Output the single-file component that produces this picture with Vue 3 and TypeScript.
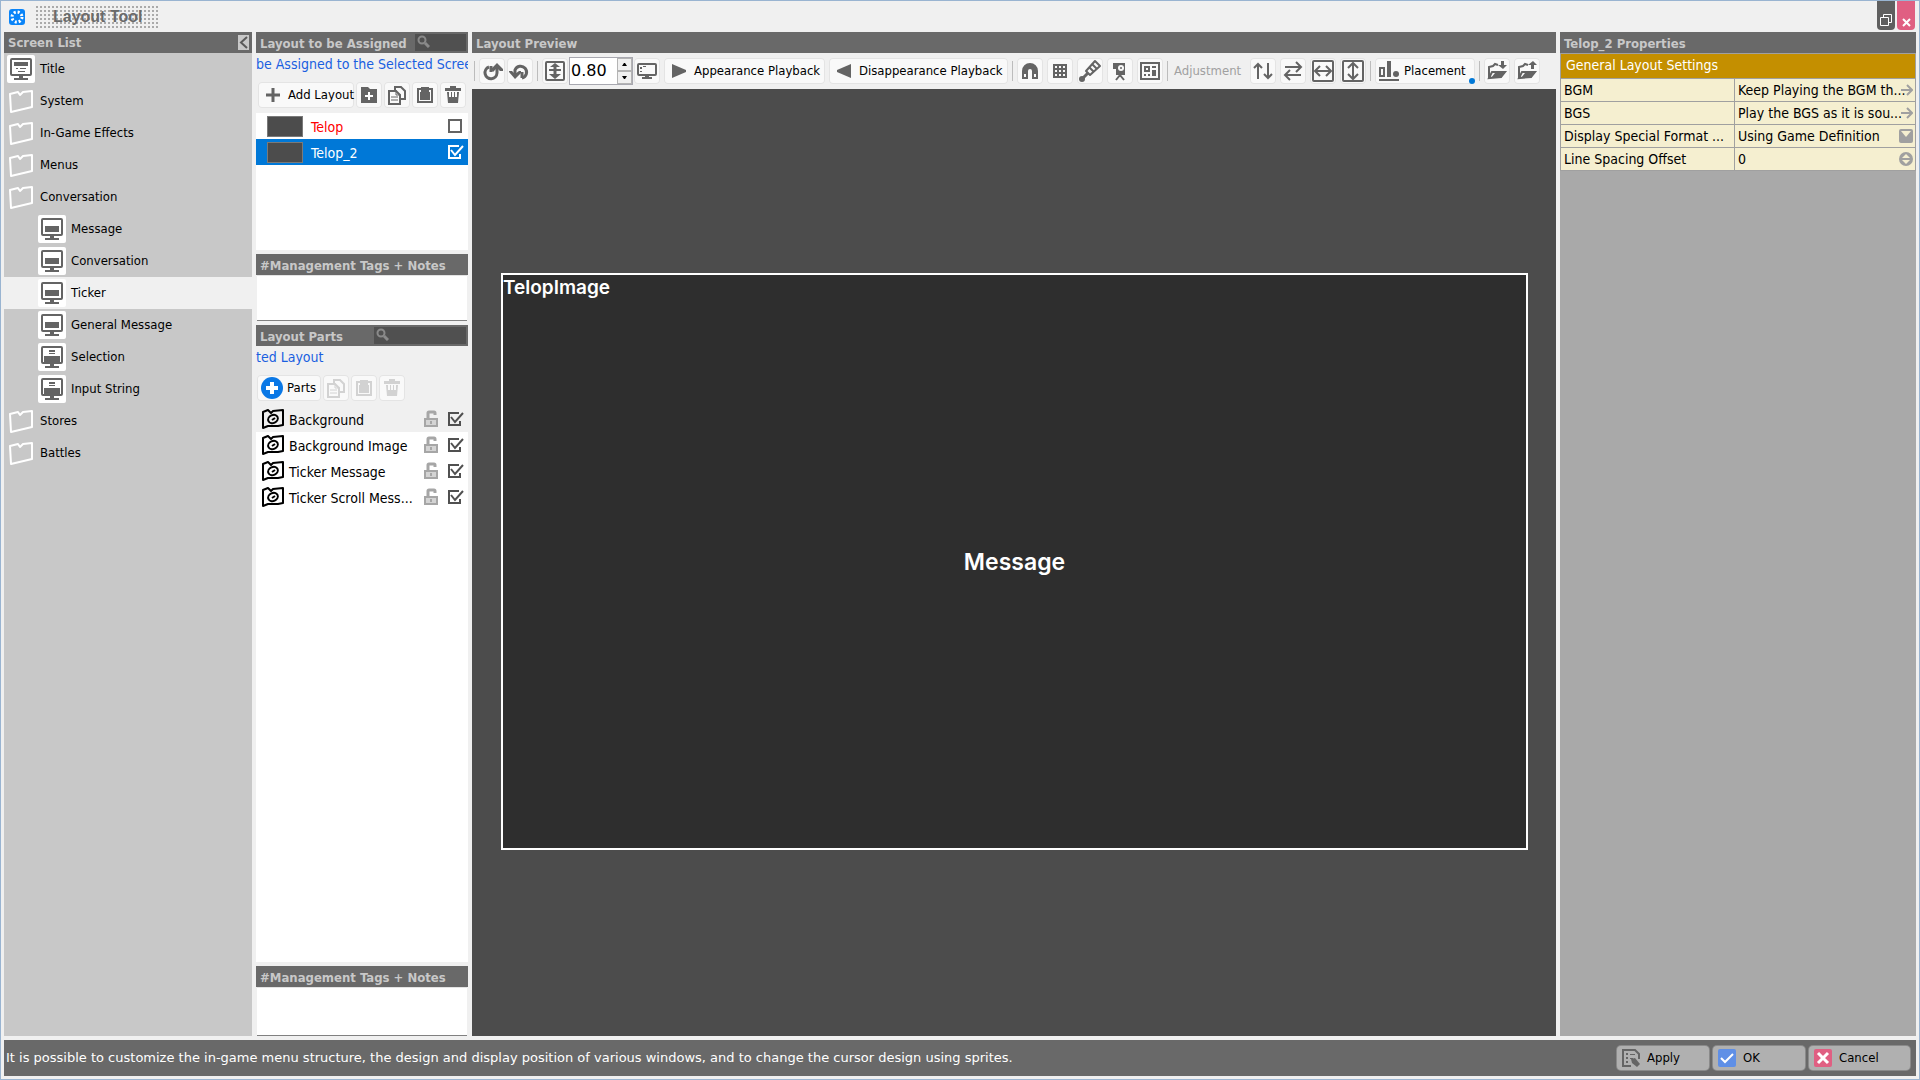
<script setup lang="ts">
import { ref } from 'vue'

interface Screen {
  name: string
  icon: string
  child?: boolean
}

const screens: Screen[] = [
  { name: 'Title', icon: 'title' },
  { name: 'System', icon: 'folder' },
  { name: 'In-Game Effects', icon: 'folder' },
  { name: 'Menus', icon: 'folder' },
  { name: 'Conversation', icon: 'folder' },
  { name: 'Message', icon: 'message', child: true },
  { name: 'Conversation', icon: 'message', child: true },
  { name: 'Ticker', icon: 'message', child: true },
  { name: 'General Message', icon: 'message', child: true },
  { name: 'Selection', icon: 'choice', child: true },
  { name: 'Input String', icon: 'choice', child: true },
  { name: 'Stores', icon: 'folder' },
  { name: 'Battles', icon: 'folder' },
]
const selectedScreen = ref(7)

const layouts = ref([
  { name: 'Telop', used: false },
  { name: 'Telop_2', used: true },
])
const selectedLayout = ref(1)

const parts = ref([
  { name: 'Background', shown: true },
  { name: 'Background Image', shown: true },
  { name: 'Ticker Message', shown: true },
  { name: 'Ticker Scroll Mess...', shown: true },
])
const selectedPart = ref(0)

const zoom = ref('0.80')
const layoutNotes = ref('')
const partNotes = ref('')
const lineSpacing = ref('0')

const monitor =
  '<rect width="28" height="28" rx="2" fill="#fff"/><rect x="4" y="4" width="20" height="16" rx="1" fill="none" stroke="#646464" stroke-width="2"/><path d="M12 21h4v2h5v2H7v-2h5z" fill="#646464"/>'

const treeIcons: Record<string, string> = {
  title: monitor + '<path d="M7 7h14v4H7zM9 13h2v1H9zM13 13h6v1h-6zM11 16h7v1h-7z" fill="#646464"/>',
  message: monitor + '<path d="M7 11h14v6H7z" fill="#646464"/>',
  choice: monitor + '<path d="M11 7h6v2h-6zM11 10h6v1h-6zM6 13h16v6H6z" fill="#646464"/>',
  folder: '<path d="M3 7l8-2 2 3 3-3 9-1v16L4 25z" fill="none" stroke="#fff" stroke-width="2" stroke-linejoin="round"/>',
}

const trash = '<path d="M5 6h5V4h6v2h5v3H5zM7 10h2v5h2v-5h1v5h2v-5h1v5h2v-5h2l-1 11H8z" fill="currentColor"/>'
const copy =
  '<path d="M11 8V5h6l4 4v8h-4" fill="none" stroke="currentColor" stroke-width="2"/><path d="M5 9h7l4 4v9H5z" fill="#f9f9f9" stroke="currentColor" stroke-width="2"/><path d="M12 8v5h5M7 15h7M7 18h7" fill="none" stroke="currentColor" stroke-width="1"/>'
const paste =
  '<path d="M5 6h4V5h8v1h4v15H5zM7 8v11h12V8z" fill="currentColor" fill-rule="evenodd"/><path d="M9 8h8v2h1v8H8v-8h1z" fill="currentColor"/>'

const icons: Record<string, string> = {
  trash,
  copy,
  paste,
  newFolder: '<path d="M5 5h7l2 2h7v14H5z" fill="currentColor"/><path d="M13 10v8M9 14h8" stroke="#fff" stroke-width="2"/>',
  redo: '<path d="M10 9a6 6 0 1 0 8 6V9" fill="none" stroke="currentColor" stroke-width="3"/><path d="M12 11l6-6 6 6v2h-3l-3-3-4 4z" fill="currentColor"/><path d="M12 8v6" stroke="currentColor" stroke-width="3"/>',
  undo: '<path d="M15 20a6 6 0 1 0-7-8v6" fill="none" stroke="currentColor" stroke-width="3"/><path d="M2 14l6 7 6-6v-2h-2l-4 3-3-3H2z" fill="currentColor"/><path d="M15 20v-6" stroke="currentColor" stroke-width="3"/>',
  fit: '<rect x="4" y="4" width="18" height="18" rx="1" fill="none" stroke="currentColor" stroke-width="2"/><path d="M13 7v11" stroke="currentColor" stroke-width="3"/><path d="M7 12h12" stroke="currentColor" stroke-width="2"/><path d="M13 5l5 4H8zM13 21l-6-5h12z" fill="currentColor"/>',
  screen: '<rect x="4" y="6" width="18" height="11" rx="1" fill="none" stroke="currentColor" stroke-width="2"/><path d="M11 17h4v2h3v2H8v-2h3zM6 9h2v2H6zM9 8h3v1H9zM6 13h2v1H6z" fill="currentColor"/>',
  magnet: '<path d="M5 21V13a8 8 0 0 1 16 0v8h-6v-8a2 2 0 0 0-4 0v8z" fill="currentColor"/><path d="M7 16v3h2v-3zM17 16v3h2v-3z" fill="#f9f9f9"/>',
  grid: '<path d="M6 6h14v14H6z" fill="currentColor"/><path d="M8 8h2v2H8zM12 8h2v2h-2zM16 8h2v2h-2zM8 12h2v2H8zM12 12h2v2h-2zM16 12h2v2h-2zM8 16h2v2H8zM12 16h2v2h-2zM16 16h2v2h-2z" fill="#f9f9f9"/>',
  brush: '<path d="M9 13L18 3l5 5-10 9z" fill="#f9f9f9" stroke="currentColor" stroke-width="2" stroke-linejoin="round"/><path d="M15 6l5 5M12 9l5 5" stroke="currentColor" stroke-width="2"/><circle cx="5" cy="21" r="3" fill="currentColor"/><path d="M6 20l5-5" stroke="currentColor" stroke-width="3"/>',
  camera: '<path d="M6 5h12v12H9v-6H6z" fill="currentColor"/><circle cx="14" cy="10" r="3" fill="#f9f9f9"/><circle cx="14" cy="10" r="1" fill="currentColor"/><path d="M13 16v2M13 17l-4 5M13 17l4 5" stroke="currentColor" stroke-width="2"/>',
  frame: '<rect x="4" y="5" width="18" height="16" fill="none" stroke="currentColor" stroke-width="2"/><path d="M7 8h6v6H7zM9 10v2h2v-2zM15 8h4v2h-4zM15 12h4v6h-4zM7 16h2v2H7zM11 16h2v2h-2z" fill="currentColor" fill-rule="evenodd"/>',
  vertical: '<path d="M8 21V6M4 10l4-4 4 4M18 5v15M14 16l4 4 4-4" fill="none" stroke="currentColor" stroke-width="2"/>',
  horizontal: '<path d="M5 9h15M16 4l5 5-5 5M21 17H6M10 12l-5 5 5 5" fill="none" stroke="currentColor" stroke-width="2"/>',
  stretchH: '<rect x="3" y="3" width="20" height="20" rx="1" fill="none" stroke="currentColor" stroke-width="2"/><path d="M6 13h14M10 8l-5 5 5 5M16 8l5 5-5 5" fill="none" stroke="currentColor" stroke-width="2"/>',
  stretchV: '<rect x="3" y="3" width="20" height="20" rx="1" fill="none" stroke="currentColor" stroke-width="2"/><path d="M13 6v14M8 10l5-5 5 5M8 16l5 5 5-5" fill="none" stroke="currentColor" stroke-width="2"/>',
  importFile: '<path d="M5 20V9l4-1 2-2 3 1M5 20l3-6h13l-4 5z" fill="none" stroke="currentColor" stroke-width="2"/><path d="M7 20l4-5 11-2-5 7z" fill="currentColor"/><path d="M17 3h3v4h3l-4 4-5-4h3z" fill="currentColor"/>',
  exportFile: '<path d="M5 20V9l4-1 2-2 3 1M5 20l3-6h13l-4 5z" fill="none" stroke="currentColor" stroke-width="2"/><path d="M7 20l4-5 11-2-5 7z" fill="currentColor"/><path d="M17 11h3V7h3l-4-4-5 4h3z" fill="currentColor"/>',
}

const layoutTools = ['newFolder', 'copy', 'paste', 'trash']
const partTools = ['copy', 'paste', 'trash']
const viewTools = ['magnet', 'grid', 'brush', 'camera', 'frame']
const adjustTools = ['vertical', 'horizontal', 'stretchH', 'stretchV']
</script>

<template>
  <div class="window">
    <header class="titlebar">
      <svg class="app-icon" width="16" height="16" viewBox="0 0 16 16">
        <rect width="16" height="16" rx="3" fill="#0a84f8" />
        <circle cx="8" cy="8" r="5" fill="none" stroke="#fff" stroke-width="3" stroke-dasharray="2 1.93" />
      </svg>
      <h1>Layout Tool</h1>
      <div class="window-buttons">
        <button class="restore" aria-label="Restore">
          <svg width="18" height="29" viewBox="0 0 18 29">
            <path d="M3.500 16.500h8v8h-8zM6.500 16v-2.500h8v8H12" fill="none" stroke="#fff" />
          </svg>
        </button>
        <button class="close" aria-label="Close">
          <svg width="18" height="29" viewBox="0 0 18 29">
            <path d="M6 18l7 7M13 18l-7 7" stroke="#fff" stroke-width="2" />
          </svg>
        </button>
      </div>
    </header>

    <main class="panels">
      <section class="panel screen-list">
        <h2 class="panel-head">
          Screen List
          <button class="collapse" aria-label="Collapse">
            <svg width="11" height="15" viewBox="0 0 11 15">
              <path d="M9 2L3 7.500 9 13" fill="none" stroke="#5a5a5a" stroke-width="2" />
            </svg>
          </button>
        </h2>
        <ul class="tree">
          <li v-for="(screen, i) in screens" :key="i">
            <button
              class="tree-item"
              :class="{ child: screen.child, selected: i === selectedScreen }"
              @click="selectedScreen = i"
            >
              <svg width="28" height="28" viewBox="0 0 28 28" v-html="treeIcons[screen.icon]" />
              <span>{{ screen.name }}</span>
            </button>
          </li>
        </ul>
      </section>

      <section class="column">
        <div class="panel-head">
          <h2>Layout to be Assigned</h2>
          <label class="search narrow">
            <svg width="13" height="13" viewBox="0 0 13 13">
              <circle cx="5" cy="5" r="3.500" fill="none" stroke="#8a8a8a" stroke-width="2" />
              <path d="M8 8l4 4" stroke="#8a8a8a" stroke-width="3" />
            </svg>
            <input type="text" aria-label="Search layouts" />
          </label>
        </div>
        <a href="#" class="hint">be Assigned to the Selected Scree</a>
        <div class="tools layout-tools">
          <button class="tool labelled add">
            <svg width="14" height="14" viewBox="0 0 14 14"><path d="M7 0v14M0 7h14" stroke="#646464" stroke-width="3" /></svg>
            Add Layout
          </button>
          <button v-for="t in layoutTools" :key="t" class="tool" :aria-label="t">
            <svg width="26" height="26" viewBox="0 0 26 26" v-html="icons[t]" />
          </button>
        </div>
        <ul class="list layouts">
          <li
            v-for="(layout, i) in layouts"
            :key="layout.name"
            class="layout-row"
            :class="{ selected: i === selectedLayout }"
            @click="selectedLayout = i"
          >
            <span class="thumb"></span>
            <span class="row-name">{{ layout.name }}</span>
            <label class="check">
              <input v-model="layout.used" type="checkbox" :aria-label="layout.name" />
              <svg width="18" height="16" viewBox="0 0 18 16">
                <path v-if="layout.used" d="M12 2H2v12h11v-4" fill="none" stroke="currentColor" stroke-width="2" />
                <path v-if="layout.used" d="M4 6l4 5 8-9" fill="none" stroke="currentColor" stroke-width="2" />
                <rect v-else x="2" y="2" width="12" height="12" fill="none" stroke="currentColor" stroke-width="2" />
              </svg>
            </label>
          </li>
        </ul>
        <h2 class="panel-head notes-head"><label for="layout-notes">#Management Tags + Notes</label></h2>
        <textarea id="layout-notes" v-model="layoutNotes" class="notes"></textarea>

        <div class="panel-head parts-head">
          <h2>Layout Parts</h2>
          <label class="search wide">
            <svg width="13" height="13" viewBox="0 0 13 13">
              <circle cx="5" cy="5" r="3.500" fill="none" stroke="#8a8a8a" stroke-width="2" />
              <path d="M8 8l4 4" stroke="#8a8a8a" stroke-width="3" />
            </svg>
            <input type="text" aria-label="Search parts" />
          </label>
        </div>
        <a href="#" class="hint">ted Layout</a>
        <div class="tools part-tools">
          <button class="tool labelled parts-button">
            <svg width="22" height="22" viewBox="0 0 22 22">
              <circle cx="11" cy="11" r="11" fill="#0a78e6" />
              <path d="M11 5v12M5 11h12" stroke="#fff" stroke-width="4" />
            </svg>
            Parts
          </button>
          <button v-for="t in partTools" :key="t" class="tool" disabled :aria-label="t">
            <svg width="26" height="26" viewBox="0 0 26 26" v-html="icons[t]" />
          </button>
        </div>
        <ul class="list parts">
          <li
            v-for="(part, i) in parts"
            :key="part.name"
            class="part-row"
            :class="{ selected: i === selectedPart }"
            @click="selectedPart = i"
          >
            <svg width="24" height="24" viewBox="0 0 24 24">
              <path d="M2 5l5-2 3 3 2-2 10-1v15l-5 1H7l-5 2z" fill="none" stroke="#000" stroke-width="2" stroke-linejoin="round" />
              <ellipse cx="12" cy="12" rx="5" ry="4" fill="none" stroke="#000" stroke-width="2" transform="rotate(-25 12 12)" />
              <path d="M11 13l3-2" stroke="#000" stroke-width="2" />
            </svg>
            <span class="row-name">{{ part.name }}</span>
            <svg width="14" height="18" viewBox="0 0 14 18">
              <path d="M4 9V3q0-1 1-1h5q1 0 1 1v2" fill="none" stroke="#a6a6a6" stroke-width="3" />
              <path d="M1 9h12v7H1z" fill="#d4d4d4" stroke="#a6a6a6" stroke-width="2" />
              <path d="M6 11h2v3H6z" fill="#a6a6a6" />
            </svg>
            <label class="check">
              <input v-model="part.shown" type="checkbox" :aria-label="part.name" />
              <svg width="18" height="16" viewBox="0 0 18 16">
                <path v-if="part.shown" d="M12 2H2v12h11v-4" fill="none" stroke="currentColor" stroke-width="2" />
                <path v-if="part.shown" d="M4 6l4 5 8-9" fill="none" stroke="currentColor" stroke-width="2" />
                <rect v-else x="2" y="2" width="12" height="12" fill="none" stroke="currentColor" stroke-width="2" />
              </svg>
            </label>
          </li>
        </ul>
        <h2 class="panel-head notes-head"><label for="part-notes">#Management Tags + Notes</label></h2>
        <textarea id="part-notes" v-model="partNotes" class="notes part-notes"></textarea>
      </section>

      <section class="column">
        <h2 class="panel-head">Layout Preview</h2>
        <div class="toolbar">
          <i class="sep"></i>
          <div class="group history">
            <button class="tool" aria-label="Redo"><svg width="26" height="26" viewBox="0 0 26 26" v-html="icons.redo" /></button>
            <button class="tool" aria-label="Undo"><svg width="26" height="26" viewBox="0 0 26 26" v-html="icons.undo" /></button>
          </div>
          <i class="sep"></i>
          <div class="group zoom">
            <button class="tool" aria-label="Fit"><svg width="26" height="26" viewBox="0 0 26 26" v-html="icons.fit" /></button>
            <div class="spin">
              <input v-model="zoom" type="text" aria-label="Zoom" />
              <div class="spin-buttons">
                <button aria-label="Increase"><svg width="5" height="3" viewBox="0 0 5 3"><path d="M0 3h5L3 0H2z" /></svg></button>
                <button aria-label="Decrease"><svg width="5" height="3" viewBox="0 0 5 3"><path d="M0 0h5L3 3H2z" /></svg></button>
              </div>
            </div>
            <button class="tool" aria-label="Screen size"><svg width="26" height="26" viewBox="0 0 26 26" v-html="icons.screen" /></button>
          </div>
          <button class="tool labelled appear">
            <svg width="14" height="14" viewBox="0 0 14 14"><path d="M0 0l14 6v2L0 14z" fill="#646464" /></svg>
            Appearance Playback
          </button>
          <button class="tool labelled disappear">
            <svg width="14" height="14" viewBox="0 0 14 14"><path d="M14 0L0 6v2l14 6z" fill="#646464" /></svg>
            Disappearance Playback
          </button>
          <i class="sep"></i>
          <div class="group">
            <button v-for="t in viewTools" :key="t" class="tool" :aria-label="t">
              <svg width="26" height="26" viewBox="0 0 26 26" v-html="icons[t]" />
            </button>
          </div>
          <i class="sep"></i>
          <span class="adjust-label">Adjustment</span>
          <div class="group">
            <button v-for="t in adjustTools" :key="t" class="tool" :aria-label="t">
              <svg width="26" height="26" viewBox="0 0 26 26" v-html="icons[t]" />
            </button>
          </div>
          <i class="sep"></i>
          <button class="tool labelled placement">
            <svg width="20" height="20" viewBox="0 0 20 20">
              <path d="M0 18h20v2H0zM8 0h4v16H8z" fill="#646464" />
              <path d="M1 7h4v8H1z" fill="none" stroke="#646464" stroke-width="2" />
              <circle cx="17" cy="13" r="3" fill="#646464" />
            </svg>
            Placement
            <i class="dot"></i>
          </button>
          <i class="sep"></i>
          <div class="group">
            <button class="tool" aria-label="Import"><svg width="26" height="26" viewBox="0 0 26 26" v-html="icons.importFile" /></button>
            <button class="tool" aria-label="Export"><svg width="26" height="26" viewBox="0 0 26 26" v-html="icons.exportFile" /></button>
          </div>
        </div>
        <div class="stage">
          <div class="canvas">
            <span class="part-label">TelopImage</span>
            <span class="message-label">Message</span>
          </div>
        </div>
      </section>

      <section class="panel properties">
        <h2 class="panel-head">Telop_2 Properties</h2>
        <table>
          <colgroup>
            <col class="name-col" />
            <col />
          </colgroup>
          <thead>
            <tr><th colspan="2">General Layout Settings</th></tr>
          </thead>
          <tbody>
            <tr>
              <td>BGM</td>
              <td>
                <button class="value">
                  Keep Playing the BGM th...
                  <svg width="12" height="12" viewBox="0 0 12 12"><path d="M0 6h11M6 1l5 5-5 5" fill="none" stroke="#a0a0a0" stroke-width="2" /></svg>
                </button>
              </td>
            </tr>
            <tr>
              <td>BGS</td>
              <td>
                <button class="value">
                  Play the BGS as it is sou...
                  <svg width="12" height="12" viewBox="0 0 12 12"><path d="M0 6h11M6 1l5 5-5 5" fill="none" stroke="#a0a0a0" stroke-width="2" /></svg>
                </button>
              </td>
            </tr>
            <tr>
              <td><label for="special-format">Display Special Format ...</label></td>
              <td>
                <div class="value">
                  <select id="special-format"><option>Using Game Definition</option></select>
                  <svg width="14" height="14" viewBox="0 0 14 14">
                    <rect width="14" height="14" rx="2" fill="#a0a0a0" />
                    <path d="M2 2h10L7 8z" fill="#f5efd0" />
                  </svg>
                </div>
              </td>
            </tr>
            <tr>
              <td><label for="line-spacing">Line Spacing Offset</label></td>
              <td>
                <div class="value">
                  <input id="line-spacing" v-model="lineSpacing" type="text" />
                  <svg width="14" height="14" viewBox="0 0 14 14">
                    <circle cx="7" cy="7" r="7" fill="#a0a0a0" />
                    <path d="M3 6l4-4 4 4zM3 8l4 4 4-4z" fill="#f5efd0" />
                  </svg>
                </div>
              </td>
            </tr>
          </tbody>
        </table>
      </section>
    </main>

    <footer class="statusbar">
      <p>It is possible to customize the in-game menu structure, the design and display position of various windows, and to change the cursor design using sprites.</p>
      <button class="action">
        <svg width="18" height="18" viewBox="0 0 18 18">
          <path d="M9 17H1V1h12l4 4v5" fill="none" stroke="#646464" stroke-width="2" />
          <path d="M4 4h2v2H4zM8 5h5v1H8zM4 8h2v2H4zM8 9h3v1H8zM4 12h2v2H4z" fill="#646464" />
          <path d="M9 10l4-1 5 6-3 3-5-4z" fill="#646464" />
        </svg>
        Apply
      </button>
      <button class="action">
        <svg width="18" height="18" viewBox="0 0 18 18">
          <rect width="18" height="18" rx="2" fill="#5f8fe6" />
          <path d="M3 9l4 4 8-8" fill="none" stroke="#fff" stroke-width="2" />
        </svg>
        OK
      </button>
      <button class="action cancel">
        <svg width="18" height="18" viewBox="0 0 18 18">
          <rect width="18" height="18" rx="2" fill="#e05f82" />
          <path d="M4 4l10 10M14 4L4 14" stroke="#fff" stroke-width="3" />
        </svg>
        Cancel
      </button>
    </footer>
  </div>
</template>

<style>
body {
  margin: 0;
  background: #f0f0f0;
}
</style>

<style scoped>
.window,
.window * {
  box-sizing: border-box;
}
.window {
  display: flex;
  flex-direction: column;
  min-height: 100vh;
  padding: 0 3px 3px;
  border: 1px solid #99b4d1;
  background: #f0f0f0;
  color: #000;
  font: 13px/20px "DejaVu Sans Condensed", "DejaVu Sans", sans-serif;
}
button,
input,
select,
textarea {
  margin: 0;
  padding: 0;
  border: 0;
  background: none;
  color: inherit;
  font: inherit;
}
h1,
h2,
p,
ul {
  margin: 0;
  padding: 0;
}
ul {
  list-style: none;
}
svg {
  display: block;
  flex: none;
}

.titlebar {
  display: flex;
  height: 31px;
  padding-right: 1px;
}
.app-icon {
  margin: 8px 9px 0 5px;
}
h1 {
  width: 126px;
  height: 22px;
  margin-top: 5px;
  padding-left: 19px;
  background: conic-gradient(#aaa 25%, transparent 0) 0 0 / 4px 4px;
  color: #6a6a6a;
  font: bold 16px/22px "Liberation Sans", sans-serif;
  white-space: nowrap;
}
.window-buttons {
  display: flex;
  gap: 2px;
  margin-left: auto;
}
.window-buttons button {
  width: 18px;
  height: 29px;
  border-radius: 0 0 4px 4px;
}
.restore {
  background: #5f5f5f;
}
.close {
  background: #e05f82;
}

.panels {
  display: grid;
  flex: 1;
  grid-template-columns: 248px 212px minmax(0, 1fr) 356px;
  gap: 4px;
}
.column,
.panel {
  display: flex;
  flex-direction: column;
  min-width: 0;
}
.panel-head {
  display: flex;
  flex: none;
  align-items: center;
  justify-content: space-between;
  height: 21px;
  padding: 2px 2px 0 4px;
  background: #696969;
  color: #c8c8c8;
  font-size: 13px;
  font-weight: bold;
  line-height: 19px;
  white-space: nowrap;
}
.panel-head h2 {
  font-size: 13px;
}
.screen-list {
  background: #c8c8c8;
}
.screen-list .panel-head {
  padding: 0 3px 0 4px;
}
.collapse {
  width: 11px;
  height: 15px;
  background: #c8c8c8;
}
.tree-item {
  display: flex;
  align-items: center;
  gap: 5px;
  width: 100%;
  height: 32px;
  padding-left: 3px;
}
.tree-item.child {
  padding-left: 34px;
}
.tree-item.selected {
  background: #f0f0f0;
}

.search {
  display: flex;
  height: 17px;
  margin-bottom: 2px;
  padding: 1px 2px;
  background: #505050;
}
.search input {
  flex: 1;
  min-width: 0;
}
.search.narrow {
  width: 51px;
}
.search.wide {
  width: 92px;
}
.hint {
  height: 24px;
  overflow: hidden;
  color: #1a5fe0;
  font-size: 14px;
  line-height: 22px;
  text-decoration: none;
  white-space: nowrap;
}
.tools {
  display: flex;
  gap: 2px;
  height: 36px;
  padding-top: 5px;
}
.layout-tools {
  padding-left: 2px;
}
.part-tools {
  padding-left: 1px;
}
.tool {
  display: flex;
  flex: none;
  align-items: center;
  justify-content: center;
  width: 26px;
  height: 26px;
  border-radius: 4px;
  background: #f9f9f9;
  box-shadow: inset 0 0 0 1px #e4e4e4;
  color: #646464;
  white-space: nowrap;
}
.tool:disabled {
  color: #d2d2d2;
}
.tool.labelled {
  justify-content: flex-start;
  gap: 8px;
  padding-left: 8px;
  color: #000;
}
.tool.add {
  width: 96px;
}
.tool.parts-button {
  gap: 4px;
  width: 64px;
  padding-left: 4px;
}
.tool.appear {
  width: 161px;
}
.tool.disappear {
  width: 179px;
}
.tool.placement {
  position: relative;
  gap: 5px;
  width: 100px;
  padding-left: 4px;
}
.list {
  background: #fff;
}
.layouts {
  height: 137px;
}
.layout-row,
.part-row {
  display: flex;
  align-items: center;
  height: 26px;
  font-size: 14px;
}
.row-name {
  flex: 1;
  padding-top: 2px;
  white-space: nowrap;
}
.layout-row {
  gap: 8px;
  padding: 0 3px 0 11px;
  color: red;
}
.layout-row .check {
  color: #646464;
}
.layout-row.selected,
.layout-row.selected .check {
  background: #0078d7;
  color: #fff;
}
.thumb {
  width: 36px;
  height: 21px;
  border: 1px solid #7a7a7a;
  background: #4c4c4c;
}
.check {
  display: grid;
  color: #505050;
}
.check > * {
  grid-area: 1 / 1;
}
.check input {
  width: 18px;
  height: 16px;
  appearance: none;
}
.notes-head,
.parts-head {
  margin-top: 4px;
}
.notes {
  height: 46px;
  margin: 0 1px;
  border-top: 1px solid #e3e3e3;
  border-bottom: 1px solid #808080;
  background: #fff;
  resize: none;
}
.parts {
  flex: 1;
}
.part-row {
  gap: 4px;
  padding: 0 3px 0 5px;
}
.part-row .check {
  margin-left: 5px;
}
.part-row.selected {
  background: #f0f0f0;
}
.part-notes {
  height: 49px;
}

.toolbar {
  display: flex;
  align-items: center;
  gap: 4px;
  height: 36px;
  padding-left: 2px;
}
.group {
  display: flex;
  align-items: center;
  gap: 4px;
}
.group.history {
  gap: 2px;
}
.group.zoom {
  gap: 1px;
}
.sep {
  flex: none;
  width: 1px;
  height: 20px;
  background: #bcbcbc;
}
.spin {
  display: flex;
  width: 64px;
  height: 28px;
  border: 1px solid #a8a8b0;
  background: #fff;
}
.spin input {
  flex: 1;
  min-width: 0;
  padding-left: 1px;
  font-family: "DejaVu Sans", sans-serif;
  font-size: 16px;
}
.spin-buttons {
  display: flex;
  flex-direction: column;
  width: 15px;
}
.spin-buttons button {
  display: flex;
  flex: 1;
  align-items: center;
  justify-content: center;
  border: 1px solid #b4b4b4;
  background: #f0f0f0;
}
.adjust-label {
  width: 72px;
  margin-left: 2px;
  color: #a0a0a0;
  white-space: nowrap;
}
.dot {
  position: absolute;
  right: 0;
  bottom: 0;
  width: 6px;
  height: 6px;
  border-radius: 50%;
  background: #0078d7;
}
.stage {
  display: flex;
  flex: 1;
  align-items: center;
  justify-content: center;
  padding: 0 28px 2px 29px;
  background: #4c4c4c;
}
.canvas {
  display: grid;
  width: 100%;
  aspect-ratio: 16 / 9;
  border: 2px solid #fff;
  background: #2e2e2e;
  color: #fff;
  font-family: Inter, "Noto Sans", sans-serif;
  font-weight: 600;
}
.canvas > span {
  grid-area: 1 / 1;
}
.part-label {
  font-size: 19px;
  line-height: 26px;
}
.message-label {
  align-self: center;
  justify-self: center;
  font-size: 23px;
  line-height: 32px;
}

.properties {
  background: #a9a9a9;
}
table {
  width: 100%;
  border-collapse: collapse;
  table-layout: fixed;
  font-size: 14px;
}
.name-col {
  width: 174px;
}
th,
td {
  height: 23px;
  padding: 0 0 0 3px;
  border: 1px solid #a0a0a0;
  background: #f5efd0;
  font-weight: normal;
  line-height: 22px;
  text-align: left;
  white-space: nowrap;
}
th {
  height: 24px;
  padding: 0 0 2px 5px;
  background: #c48f00;
  color: #fff;
}
.value {
  position: relative;
  display: flex;
  align-items: center;
  width: 100%;
  height: 22px;
}
.value svg {
  position: absolute;
  right: 2px;
}
.value select,
.value input {
  flex: 1;
  min-width: 0;
  appearance: none;
}

.statusbar {
  display: flex;
  align-items: center;
  gap: 4px;
  height: 36px;
  margin-top: 4px;
  padding: 0 6px 0 2px;
  background: #696969;
  color: #fff;
}
.statusbar p {
  flex: 1;
  font-family: "DejaVu Sans", sans-serif;
}
.action {
  display: flex;
  align-items: center;
  gap: 7px;
  width: 92px;
  height: 24px;
  padding-left: 5px;
  border-radius: 4px;
  background: #b0b0b0;
  box-shadow: 0 0 0 1px #8a8a8a;
  color: #000;
}
.action.cancel {
  width: 101px;
}
</style>
